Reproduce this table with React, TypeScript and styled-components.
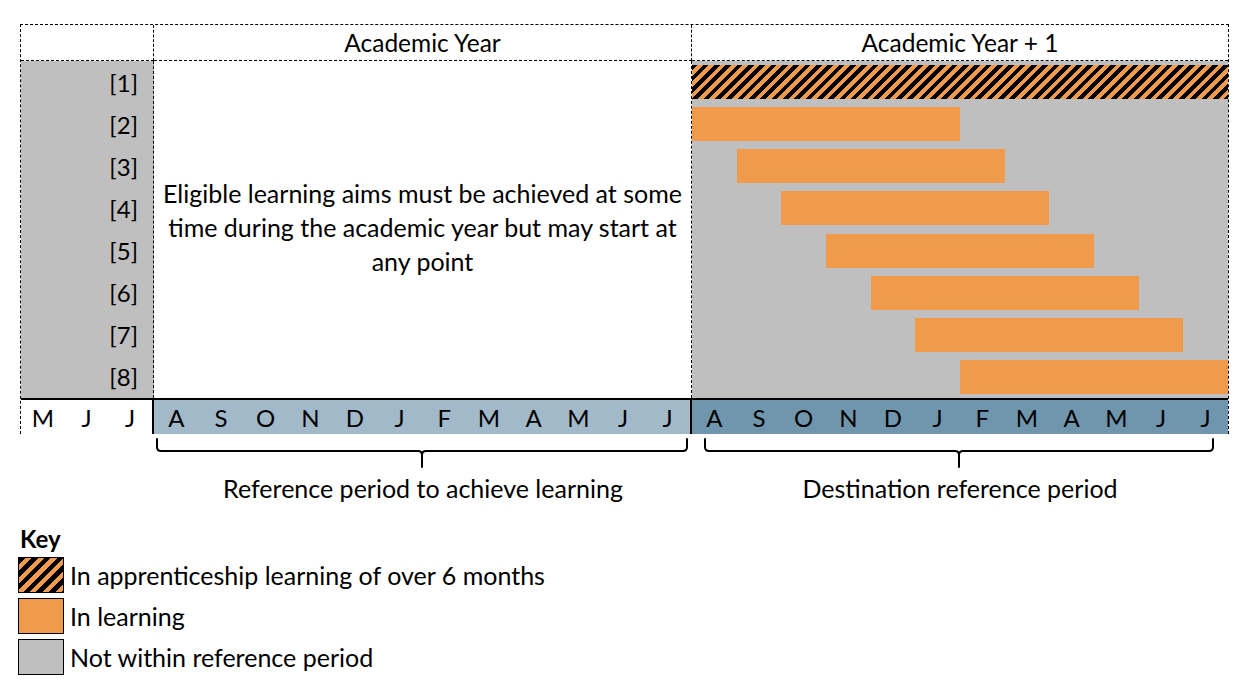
import React from 'react';
import styled, { createGlobalStyle, css } from 'styled-components';

//Styles
const GlobalStyle = createGlobalStyle`
  * { box-sizing: border-box; }
  body {
    margin: 0;
    background: #ffffff;
    color: #000000;
    font-family: Lato, "Open Sans", sans-serif;
  }
`;

const GREY = '#bfbfbf';
const ORANGE = '#f09a4b';

const hatch = (period: number) => css`
  background: repeating-linear-gradient(
    135deg,
    #000000 0,
    #000000 ${period / 2}px,
    ${ORANGE} ${period / 2}px,
    ${ORANGE} ${period}px
  );
`;

const Page = styled.div`
  padding: 24px 0 0 20px;
  width: 1241px;
`;

const Chart = styled.div`
  display: grid;
  grid-template-columns: 133px 538px 1fr;
  grid-template-rows: 36px 337px 36px;
  width: 1209px;
  border-top: 1px dashed #000;
  border-left: 1px dashed #000;
  border-right: 1px dashed #000;
`;

const HeaderCell = styled.div<{ $divider?: boolean }>`
  display: flex;
  align-items: center;
  justify-content: center;
  font-size: 24.5px;
  border-bottom: 1px dashed #000;
  border-right: ${(p) => (p.$divider ? '1px dashed #000' : 'none')};
`;

const LabelColumn = styled.div`
  display: grid;
  grid-template-rows: repeat(8, 1fr);
  background: ${GREY};
  border-right: 1px dashed #000;
`;

const RowLabel = styled.div`
  display: flex;
  align-items: center;
  justify-content: flex-end;
  padding-right: 15px;
  font-size: 24px;
`;

const NoteCell = styled.div`
  display: flex;
  align-items: center;
  justify-content: center;
  padding: 0 6px 5px;
  text-align: center;
  font-size: 25px;
  line-height: 34px;
  border-right: 1px dashed #000;
`;

const GanttColumn = styled.div`
  display: grid;
  grid-template-rows: repeat(8, 1fr);
  background: ${GREY};
`;

const GanttRow = styled.div`
  padding-top: 4px;
`;

const Bar = styled.div<{ $start: number; $span: number; $hatched?: boolean }>`
  height: 34px;
  margin-left: ${(p) => (p.$start / 12) * 100}%;
  width: ${(p) => (p.$span / 12) * 100}%;
  ${(p) => (p.$hatched ? hatch(8) : `background: ${ORANGE};`)}
`;

const MonthCell = styled.div<{ $bg: string; $count: number; $divider?: boolean }>`
  display: grid;
  grid-template-columns: repeat(${(p) => p.$count}, 1fr);
  align-items: center;
  background: ${(p) => p.$bg};
  border-top: 2px solid #000;
  border-right: ${(p) => (p.$divider ? '2px solid #000' : 'none')};
  font-size: 24px;
`;

const Month = styled.span`
  text-align: center;
`;

const BraceRow = styled.div`
  display: grid;
  grid-template-columns: 134px 538px 536px;
`;

const BraceCell = styled.div`
  display: flex;
  flex-direction: column;
  align-items: center;
`;

const BraceLabel = styled.div`
  font-size: 25px;
  line-height: 34px;
  margin-top: 3px;
`;

const KeyBlock = styled.div`
  display: flex;
  flex-direction: column;
  gap: 5px;
  margin-top: 21px;
  margin-left: -2px;
`;

const KeyTitle = styled.div`
  font-weight: 700;
  font-size: 24px;
  line-height: 26px;
  padding-left: 2px;
  margin-bottom: 0;
`;

const KeyRow = styled.div`
  display: flex;
  align-items: center;
  gap: 6px;
  font-size: 25px;
  line-height: 30px;
`;

const Swatch = styled.div<{ $kind: 'hatched' | 'orange' | 'grey' }>`
  width: 46px;
  height: 36px;
  border: 1.5px solid #000;
  ${(p) =>
    p.$kind === 'hatched'
      ? hatch(9)
      : css`
          background: ${p.$kind === 'orange' ? ORANGE : GREY};
        `}
`;

//Brace drawing
const Brace = ({ width, x1, x2 }: { width: number; x1: number; x2: number }) => {
  const cx = Math.round((x1 + x2) / 2);
  const d = [
    `M${x1},5 V13 Q${x1},17 ${x1 + 4},17 H${cx - 4} Q${cx},17 ${cx},21 V33`,
    `M${cx},21 Q${cx},17 ${cx + 4},17 H${x2 - 4} Q${x2},17 ${x2},13 V5`,
  ].join(' ');
  return (
    <svg width={width} height={34} viewBox={`0 0 ${width} 34`}>
      <path d={d} fill="none" stroke="#000" strokeWidth={2} strokeLinecap="round" />
    </svg>
  );
};

//Data
const rows = [1, 2, 3, 4, 5, 6, 7, 8];
const yearMonths = ['A', 'S', 'O', 'N', 'D', 'J', 'F', 'M', 'A', 'M', 'J', 'J'];
const preMonths = ['M', 'J', 'J'];

//JSX
export default function App() {
  return (
    <>
      <GlobalStyle />
      <Page>
        <Chart>
          <HeaderCell $divider />
          <HeaderCell $divider>Academic Year</HeaderCell>
          <HeaderCell>Academic Year + 1</HeaderCell>

          <LabelColumn>
            {rows.map((r) => (
              <RowLabel key={r}>[{r}]</RowLabel>
            ))}
          </LabelColumn>
          <NoteCell>
            Eligible learning aims must be achieved at some time during the academic year but may start at any point
          </NoteCell>
          <GanttColumn>
            {rows.map((r) => (
              <GanttRow key={r}>
                {r === 1 ? <Bar $start={0} $span={12} $hatched /> : <Bar $start={r - 2} $span={6} />}
              </GanttRow>
            ))}
          </GanttColumn>

          <MonthCell $bg="#ffffff" $count={3} $divider>
            {preMonths.map((m, i) => (
              <Month key={i}>{m}</Month>
            ))}
          </MonthCell>
          <MonthCell $bg="#a2b9c9" $count={12} $divider>
            {yearMonths.map((m, i) => (
              <Month key={i}>{m}</Month>
            ))}
          </MonthCell>
          <MonthCell $bg="#7096ae" $count={12}>
            {yearMonths.map((m, i) => (
              <Month key={i}>{m}</Month>
            ))}
          </MonthCell>
        </Chart>

        <BraceRow>
          <div />
          <BraceCell>
            <Brace width={538} x1={3} x2={533} />
            <BraceLabel>Reference period to achieve learning</BraceLabel>
          </BraceCell>
          <BraceCell>
            <Brace width={536} x1={13} x2={521} />
            <BraceLabel>Destination reference period</BraceLabel>
          </BraceCell>
        </BraceRow>

        <KeyBlock>
          <KeyTitle>Key</KeyTitle>
          <KeyRow>
            <Swatch $kind="hatched" />
            In apprenticeship learning of over 6 months
          </KeyRow>
          <KeyRow>
            <Swatch $kind="orange" />
            In learning
          </KeyRow>
          <KeyRow>
            <Swatch $kind="grey" />
            Not within reference period
          </KeyRow>
        </KeyBlock>
      </Page>
    </>
  );
}
